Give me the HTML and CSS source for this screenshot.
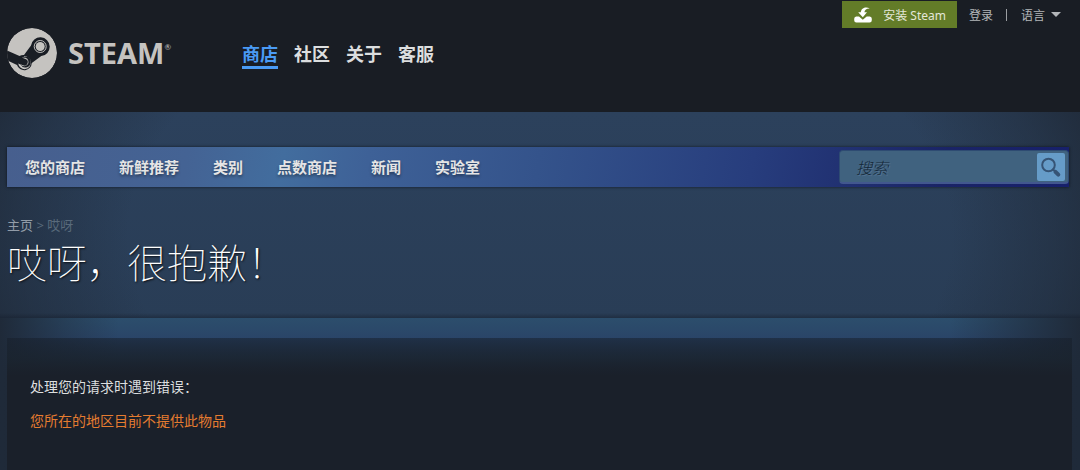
FILE: index.html
```html
<!DOCTYPE html>
<html lang="zh-CN">
<head>
<meta charset="utf-8">
<meta name="viewport" content="width=device-width, initial-scale=1">
<title>错误</title>
<link rel="stylesheet" href="styles.css">
</head>
<body>
<header class="site-header">
  <a class="logo" href="#">
    <svg class="logo-mark" viewBox="0 0 50 50" aria-hidden="true">
      <circle class="metal" cx="25" cy="25" r="25"/>
      <path class="ink" d="M-1 22L12.5 28Q14.5 26.8 17 27L24 17.5A9.4 9.4 0 1 1 34.3 28.1L24.8 35A7.6 7.6 0 0 1 10 37L0 32.2Z"/>
      <circle class="ring" cx="33.2" cy="18.5" r="6"/>
      <circle class="metal" cx="33.2" cy="18.5" r="4.5"/>
      <path class="metal" d="M11.2 35.6L13.6 36.6A5.3 5.3 0 1 0 17.8 28.9L16.6 28.4A6.4 6.4 0 1 1 11.2 35.6Z"/>
      <path class="metal" d="M14.7 29.6L18.5 31.1A3.3 3.3 0 1 1 16 37.2L13.6 36.2A4.3 4.3 0 1 0 18.6 29.8Z"/>
    </svg>
    <span class="logo-name">STEAM</span><span class="logo-reg">®</span>
  </a>
  <nav class="main-nav">
    <a class="active" href="#">商店</a>
    <a href="#">社区</a>
    <a href="#">关于</a>
    <a href="#">客服</a>
  </nav>
  <div class="actions">
    <a class="install" href="#">
      <svg class="install-icon" viewBox="0 0 18 16" aria-hidden="true">
        <path d="M15.8 1.4C12.5-.6 7.2.3 6.8 5.2H4.2L8.8 10.3L13 5.2H10.4C10.6 2.7 12.8 1.2 15.8 1.4Z"/>
        <path d="M2.2 9.5H5L8.8 12.8L12.7 9.5H15.8Q17.8 9.7 17.8 11.8V13.3Q17.8 15.5 15.6 15.5H2.4Q.2 15.5.2 13.3V11.8Q.2 9.7 2.2 9.5Z"/>
      </svg>
      安装 Steam
    </a>
    <a class="login" href="#">登录</a>
    <span class="divider"></span>
    <button class="language" type="button" aria-haspopup="menu">语言<span class="caret"></span></button>
  </div>
</header>
<section class="hero">
  <div class="store-bar">
    <nav class="store-nav">
      <a href="#">您的商店</a>
      <a href="#">新鲜推荐</a>
      <a href="#">类别</a>
      <a href="#">点数商店</a>
      <a href="#">新闻</a>
      <a href="#">实验室</a>
    </nav>
    <form class="search">
      <input type="text" placeholder="搜索" aria-label="搜索">
      <button type="button" aria-label="开始搜索">
        <svg viewBox="0 0 28 28" aria-hidden="true">
          <circle cx="11.5" cy="12" r="6.3"/>
          <path class="neck" d="M16 16.5L19 19"/>
          <path class="handle" d="M18.5 18.8L21.3 21.6"/>
        </svg>
      </button>
    </form>
  </div>
  <nav class="breadcrumb"><a href="#">主页</a> &gt; 哎呀</nav>
  <h1>哎呀，很抱歉！</h1>
</section>
<main class="content">
  <section class="error-box">
    <h2>处理您的请求时遇到错误：</h2>
    <p>您所在的地区目前不提供此物品</p>
  </section>
</main>
</body>
</html>
```

FILE: styles.css
```css
* { box-sizing: border-box; }

body {
  margin: 0;
  min-height: 100vh;
  display: flex;
  flex-direction: column;
  background: #1e2737;
  color: #dcdedf;
  font-family: "Noto Sans", "Noto Sans CJK SC", sans-serif;
  font-size: 14px;
}

a { color: inherit; text-decoration: none; }
button { font: inherit; color: inherit; border: 0; padding: 0; cursor: pointer; }

.site-header {
  display: flex;
  align-items: flex-start;
  height: 112px;
  padding: 0 19px 0 7px;
  background: #191d24;
}

.logo {
  display: flex;
  align-items: center;
  width: 235px;
  padding-top: 28px;
  color: #c5c3c0;
}
.logo-mark { width: 50px; height: 50px; margin-right: 11px; border-radius: 50%; }
.metal { fill: #c5c3c0; }
.ink { fill: #191d24; }
.ring { fill: none; stroke: #c5c3c0; stroke-width: 1; }
.logo-name { font: 700 29px/50px "Noto Sans", sans-serif; }
.logo-reg { font: 8px/8px Lato, sans-serif; align-self: flex-start; margin-top: 15px; }

.main-nav {
  display: flex;
  gap: 16px;
  padding-top: 42px;
  font-size: 18px;
  line-height: 24px;
  font-weight: 700;
}
.main-nav .active { color: #4a9bf5; border-bottom: 3px solid #4a9bf5; }

.actions {
  display: flex;
  align-items: center;
  margin-left: auto;
  padding-top: 1px;
  font-size: 12px;
  color: #b3b6b9;
}
.install {
  display: flex;
  align-items: center;
  height: 27px;
  padding: 0 11px 0 12px;
  margin-right: 12px;
  background: #637c28;
  color: #e3e7d9;
}
.install-icon { width: 18px; height: 16px; margin-right: 11px; fill: #fff; }
.divider { width: 1px; height: 12px; margin: 0 14px 0 13px; background: #9b9ea2; }
.language { display: flex; align-items: center; gap: 6px; background: none; }
.caret { border: 5px solid transparent; border-top-color: #b3b6b9; border-bottom: 0; }

.hero {
  height: 206px;
  padding: 35px 11px 0 7px;
  background:
    linear-gradient(transparent 201px, rgba(20, 28, 42, .45) 206px),
    radial-gradient(ellipse 56% 180% at 50% 60%, transparent 68%, rgba(31, 41, 55, .5) 86%, #1f2937 100%),
    linear-gradient(#2c415c, #293d56);
}

.store-bar {
  display: flex;
  align-items: center;
  height: 40px;
  padding-left: 18px;
  background: linear-gradient(100deg, #475f8e, #446394 17%, #426d9e 26%, #3e6197 34%, #34538b 50%, #273d7d 70%, #1a2466 88%, #17206b);
  box-shadow: 0 0 3px rgba(0, 0, 0, .6);
}
.store-nav {
  display: flex;
  gap: 34px;
  font-size: 15px;
  line-height: 20px;
  font-weight: 700;
  color: #e5e5e5;
  text-shadow: 0 2px 3px rgba(0, 0, 0, .4);
}
.search {
  display: flex;
  align-items: center;
  width: 230px;
  height: 34px;
  margin-left: auto;
  padding: 0 3px 0 2px;
  border: 1px solid #2e4b72;
  border-bottom: 2px solid #42578e;
  border-radius: 4px;
  background: #40627f;
}
.search input {
  flex: 1;
  min-width: 0;
  border: 0;
  outline: 0;
  padding: 0 14px;
  background: none;
  color: #fff;
  font: italic 300 16px "Noto Sans CJK SC", sans-serif;
}
.search input::placeholder { color: #142737; opacity: 1; text-shadow: 1px 1px 0 #557493; }
.search button { width: 28px; height: 28px; border-radius: 2px; background: #669cc8; }
.search svg { display: block; fill: none; stroke: #365475; stroke-width: 2; stroke-linecap: round; }
.search .handle { stroke-width: 4; }

.breadcrumb {
  margin-top: 28px;
  font-size: 13px;
  line-height: 20px;
  color: #596a7b;
}
.breadcrumb a { color: #929ca8; }

h1 {
  margin: 0;
  font: 100 40px/52px "Noto Sans CJK SC", sans-serif;
  color: #fff;
  text-shadow: 1px 1px 2px rgba(0, 0, 0, .8);
}

.content {
  flex: 1;
  display: flex;
  padding: 20px 8px 0 7px;
  background:
    linear-gradient(90deg, #1f2a39, rgba(31, 42, 57, .4) 6%, transparent 11%, transparent 88%, rgba(31, 42, 57, .5) 94%, #1f2a39),
    linear-gradient(#2c4e6c, #2a4568 20px, #1e2737 58px);
}
.error-box {
  flex: 1;
  padding: 39px 23px;
  background: linear-gradient(rgba(22, 30, 42, .52), rgba(25, 34, 44, .75) 20px, #1a202a 38px);
}
h2 {
  margin: 0 0 14px;
  font-size: 14px;
  line-height: 20px;
  font-weight: 400;
}
.error-box p { margin: 0; line-height: 20px; color: #e57c30; }
```
